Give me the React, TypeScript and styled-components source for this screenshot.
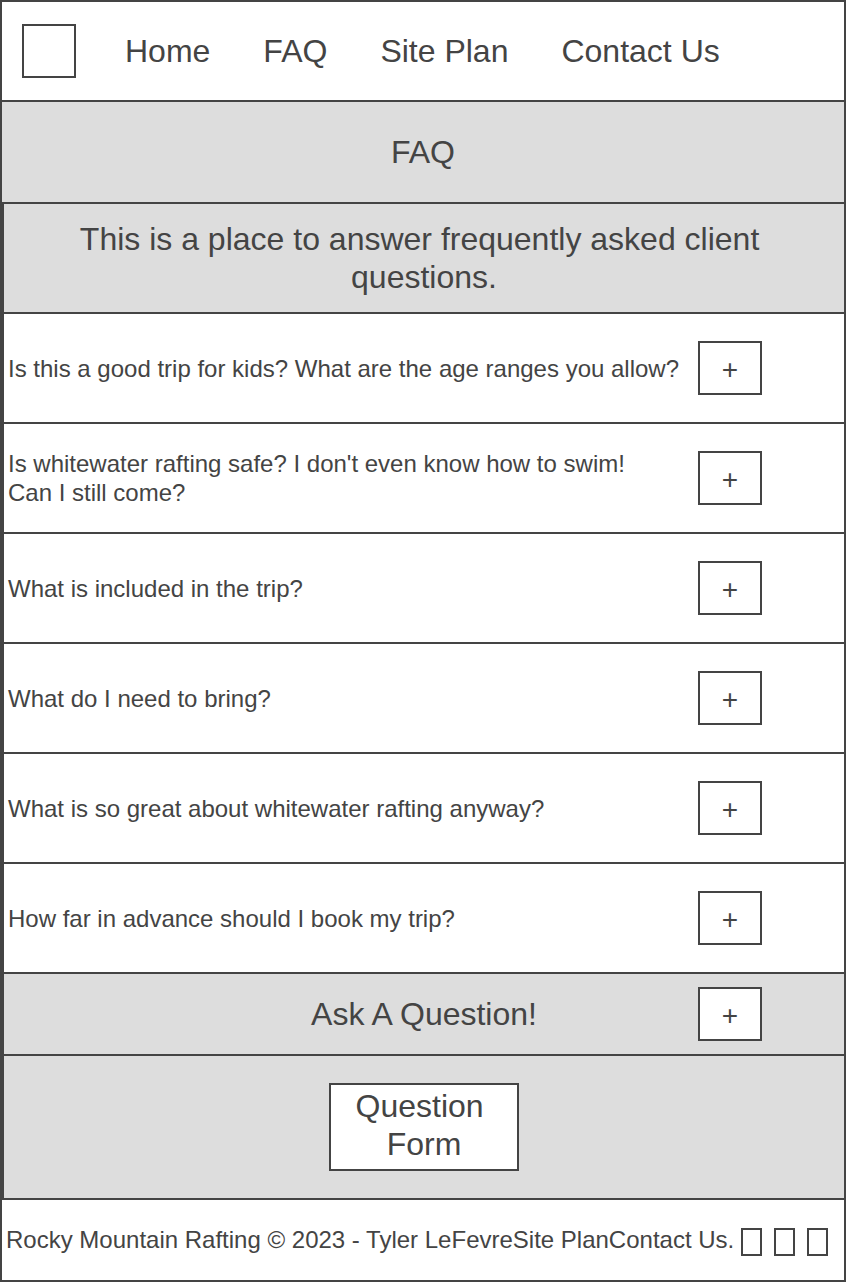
import React from "react"
import styled, { createGlobalStyle } from "styled-components"

const INK = "#444"
const BAND = "#dddddd"

const questions = [
  ["Is this a good trip for kids? What are the age ranges you allow?"],
  ["Is whitewater rafting safe? I don't even know how to swim!", "Can I still come?"],
  ["What is included in the trip?"],
  ["What do I need to bring?"],
  ["What is so great about whitewater rafting anyway?"],
  ["How far in advance should I book my trip?"],
]

const GlobalStyle = createGlobalStyle`
  body {
    margin: 0;
    background: #fff;
    font-family: "Liberation Sans", Arial, sans-serif;
    color: ${INK};
  }
`

const Page = styled.div`
  width: 846px;
  border: 2px solid ${INK};
  box-sizing: border-box;
  background: #fff;
`

const Header = styled.header`
  height: 98px;
  display: flex;
  align-items: center;
  padding-left: 20px;
  border-bottom: 2px solid ${INK};
`

const Logo = styled.div`
  width: 54px;
  height: 54px;
  box-sizing: border-box;
  border: 2px solid ${INK};
  margin-right: 49px;
`

const Nav = styled.nav`
  display: flex;
  gap: 53px;
`

const NavLink = styled.span`
  font-size: 32px;
  line-height: 1;
`

const Band = styled.div<{ $height: number }>`
  height: ${props => props.$height}px;
  background: ${BAND};
  border-bottom: 2px solid ${INK};
  display: flex;
  align-items: center;
  justify-content: center;
  text-align: center;
  font-size: 32px;
  line-height: 38px;
`

const Main = styled.main`
  border-left: 2px solid ${INK};
`

const Intro = styled.p`
  margin: 0;
  padding: 0 60px;
  white-space: break-spaces;
`

const Row = styled.div`
  height: 108px;
  border-bottom: 2px solid ${INK};
  display: grid;
  grid-template-columns: 1fr 64px;
  column-gap: 8px;
  align-items: center;
  padding: 0 82px 0 4px;
`

const Question = styled.p`
  margin: 0;
  font-size: 24px;
  line-height: 29px;
`

const PlusButton = styled.button`
  width: 64px;
  height: 54px;
  box-sizing: border-box;
  border: 2px solid ${INK};
  background: #fff;
  color: ${INK};
  font-family: "Liberation Sans", Arial, sans-serif;
  font-size: 28px;
  line-height: 1;
  padding: 3px 0 0;
`

const AskBand = styled.div`
  height: 80px;
  background: ${BAND};
  border-bottom: 2px solid ${INK};
  display: grid;
  grid-template-columns: 1fr 64px 82px;
  align-items: center;
`

const AskTitle = styled.h2`
  grid-area: 1 / 1 / 2 / 4;
  margin: 0;
  font-weight: normal;
  font-size: 32px;
  text-align: center;
`

const AskPlus = styled(PlusButton)`
  grid-area: 1 / 2 / 2 / 3;
`

const FormBox = styled.button`
  width: 190px;
  height: 88px;
  box-sizing: border-box;
  border: 2px solid ${INK};
  background: #fff;
  color: ${INK};
  font-family: "Liberation Sans", Arial, sans-serif;
  font-size: 32px;
  line-height: 38px;
  padding: 0 8px 4px;
  white-space: break-spaces;
`

const Footer = styled.footer`
  height: 80px;
  display: flex;
  align-items: center;
  padding-left: 4px;
  font-size: 24px;
`

const FooterText = styled.span`
  margin-right: 7px;
`

const Socials = styled.div`
  display: flex;
  gap: 12px;
  margin-top: 4px;
`

const Glyph = styled.span`
  width: 21px;
  height: 28px;
  box-sizing: border-box;
  border: 2px solid ${INK};
`

const App = () => {
  return (
    <>
      <GlobalStyle />
      <Page>
        <Header>
          <Logo />
          <Nav>
            <NavLink>Home</NavLink>
            <NavLink>FAQ</NavLink>
            <NavLink>Site Plan</NavLink>
            <NavLink>Contact Us</NavLink>
          </Nav>
        </Header>
        <Band $height={100}>FAQ</Band>
        <Main>
          <Band $height={108}>
            <Intro>This is a place to answer frequently asked client questions.</Intro>
          </Band>
          {questions.map((lines, i) => (
            <Row key={i}>
              <Question>
                {lines.map((line, j) => (
                  <React.Fragment key={j}>
                    {j > 0 && <br />}
                    {line}
                  </React.Fragment>
                ))}
              </Question>
              <PlusButton>+</PlusButton>
            </Row>
          ))}
          <AskBand>
            <AskTitle>Ask A Question!</AskTitle>
            <AskPlus>+</AskPlus>
          </AskBand>
          <Band $height={142}>
            <FormBox>Question Form</FormBox>
          </Band>
        </Main>
        <Footer>
          <FooterText>Rocky Mountain Rafting © 2023 - Tyler LeFevreSite PlanContact Us.</FooterText>
          <Socials>
            <Glyph />
            <Glyph />
            <Glyph />
          </Socials>
        </Footer>
      </Page>
    </>
  )
}

export default App
